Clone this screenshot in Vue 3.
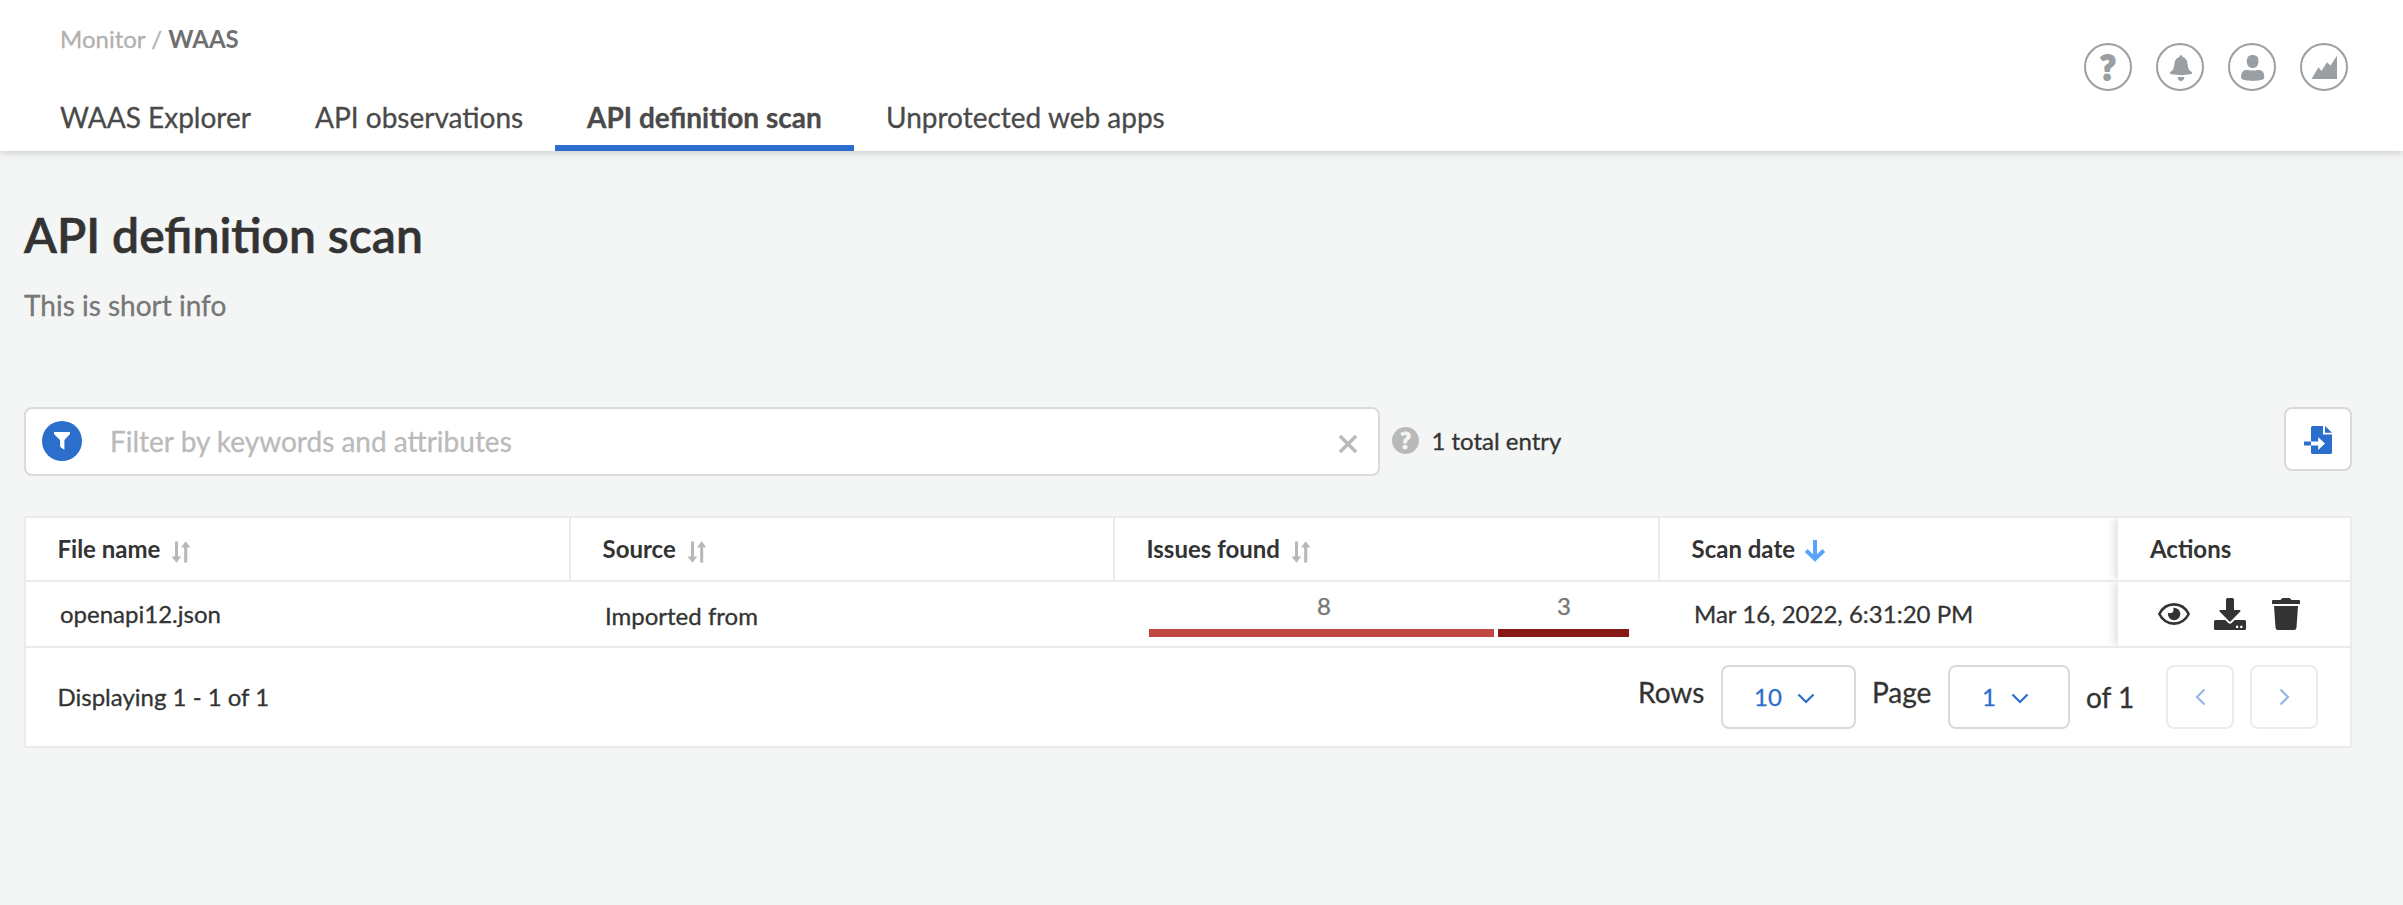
<script setup>
const tabs = [
  { label: 'WAAS Explorer', cls: 't1' },
  { label: 'API observations', cls: 't2' },
  { label: 'API definition scan', cls: 't3', active: true },
  { label: 'Unprotected web apps', cls: 't4' },
]
const columns = [
  { label: 'File name' },
  { label: 'Source' },
  { label: 'Issues found' },
  { label: 'Scan date', sorted: true },
]
</script>

<template>
  <div class="page">
    <header class="header">
      <div class="left">
        <div class="crumbs"><span>Monitor / </span><b>WAAS</b></div>
        <nav class="tabs">
          <div v-for="t in tabs" :key="t.label" class="tab" :class="[t.cls, { active: t.active }]">
            <span>{{ t.label }}</span>
          </div>
        </nav>
      </div>
      <div class="tools">
        <div class="tool"><span class="q">?</span></div>
        <div class="tool">
          <svg width="44" height="44" viewBox="0 0 44 44" fill="#999fa3">
            <path d="M23 10.300c1 0 1.600.6 1.600 1.600 3.300.9 4.600 3.600 5 7 .4 4.100 1.200 6.500 4.400 8.200.4 1.500-.3 1.900-1.500 2.200-6 1.100-13 1.100-19 0-1.200-.3-1.900-.8-1.500-2.200 3.200-1.700 4-4.100 4.400-8.200.4-3.400 1.700-6.100 5-7 0-1 .6-1.600 1.600-1.600z" />
            <path d="M19.800 32h6.400c0 2.600-1.200 4-3.200 4s-3.200-1.400-3.200-4z" />
          </svg>
        </div>
        <div class="tool">
          <svg width="44" height="44" viewBox="0 0 44 44" fill="#999fa3">
            <path d="M22.700 10c4 0 5.800 2.200 5.800 6.300 0 4-2.200 6.800-5.800 6.800s-5.900-2.800-5.900-6.800c0-4.100 1.900-6.300 5.900-6.300z" />
            <path d="M15.500 25.100c2-.5 3.500.5 7.200.5s5.200-1 7.200-.5c3.500.8 4.600 3.500 4.300 8.400-3.500 3.200-19.500 3.200-23 0-.3-4.900.8-7.600 4.300-8.400z" />
          </svg>
        </div>
        <div class="tool">
          <svg width="44" height="44" viewBox="0 0 44 44" fill="#999fa3">
            <path d="M9.500 34 16.500 22.300 19.500 26 25 17.300 28.500 20.500 35 10.500V34z" />
          </svg>
        </div>
      </div>
    </header>

    <main class="main">
      <h1>API definition scan</h1>
      <p class="info">This is short info</p>

      <div class="bar">
        <div class="search">
          <span class="funnel">
            <svg width="18" height="20" viewBox="0 0 18 20" fill="#fff"><path d="M1 1h16v2l-5.600 6v9.800l-3.200-2.100-1.200-1.700V9L1 3z" /></svg>
          </span>
          <span class="placeholder">Filter by keywords and attributes</span>
          <svg class="clear" width="20" height="20" viewBox="0 0 20 20" fill="none" stroke="#b9b9b9" stroke-width="3.400"><path d="M2 2l16 16M18 2 2 18" /></svg>
        </div>
        <span class="help">?</span>
        <span class="total">1 total entry</span>
        <button class="import">
          <svg width="28" height="28" viewBox="0 0 28 28" fill="#2c6ecb">
            <path d="M7 1.500Q7 0 8.500 0H19v8.500h9v18q0 1.500-1.500 1.500h-18Q7 28 7 26.500z" />
            <path d="M21 0 28 6.800H21z" />
            <path d="M0 15.500h7v4H0z" />
            <path fill="#fff" d="M7 15.500h7.200V11.200L21 17.500l-6.800 6.500v-4.500H7z" />
          </svg>
        </button>
      </div>

      <section class="table">
        <div class="row head">
          <div v-for="c in columns" :key="c.label" class="cell">
            <span>{{ c.label }}</span>
            <svg v-if="c.sorted" class="sorted" width="22" height="22" viewBox="0 0 22 22" fill="none" stroke="#57a5fb" stroke-width="4"><path d="M11 0v19M2.200 10.500 11 19l8.800-8.500" /></svg>
            <svg v-else class="sort" width="20" height="22" viewBox="0 0 20 22" fill="#b7b7b7"><path d="M4 0.500h3V15.500h3.200L5.500 21.800.5 15.500H4zM13.200 21.500h3V6.500h3.100L14.700.2 10 6.500h3.200z" /></svg>
          </div>
          <div class="cell actions"><span>Actions</span></div>
        </div>
        <div class="row body">
          <div class="cell">openapi12.json</div>
          <div class="cell source">Imported from</div>
          <div class="cell issues">
            <div class="issue high"><span>8</span><i></i></div>
            <div class="issue critical"><span>3</span><i></i></div>
          </div>
          <div class="cell date">Mar 16, 2022, 6:31:20 PM</div>
          <div class="cell actions">
            <svg width="32" height="22" viewBox="0 0 32 22">
              <path d="M1.300 11C4.500 4.800 10 1.400 16 1.400S27.500 4.800 30.700 11C27.500 17.200 22 20.600 16 20.600S4.500 17.200 1.300 11z" fill="none" stroke="#333" stroke-width="2.600" />
              <path d="M15.300 4.700a6.300 6.300 0 1 1-5.400 5.100c1.600.9 4.600.3 5.300-1.300.4-1.300.4-2.600.1-3.800z" fill="#333" />
            </svg>
            <svg width="32" height="32" viewBox="0 0 32 32" fill="#333">
              <path d="M13.500 0h5Q20 0 20 1.500V12h5.600q1.600.2.600 1.600L16.800 23.300q-.8.700-1.600 0L5.600 13.600Q4.600 12.200 6.200 12H12V1.500Q12 0 13.500 0z" />
              <path fill-rule="evenodd" d="M1.500 22h9.800l3 3q1.700 1.500 3.400 0l3-3h9.800Q32 22 32 23.500v7Q32 32 30.500 32h-29Q0 32 0 30.500v-7Q0 22 1.500 22zM22 27.700v2.200h2.200v-2.200zM26.200 27.700v2.200h2.200v-2.200z" />
            </svg>
            <svg width="28" height="32" viewBox="0 0 28 32" fill="#333">
              <path d="M1 2h7.500l1-1.300Q10 0 11 0h6q1 0 1.500.7l1 1.300H27q1 0 1 1v3H0V3q0-1 1-1zM2 8h24l-1.500 21.500Q24.300 32 22 32H6q-2.300 0-2.500-2.500z" />
            </svg>
          </div>
        </div>
        <div class="footer">
          <span class="displaying">Displaying 1 - 1 of 1</span>
          <span class="lbl rows">Rows</span>
          <div class="select s1">
            <span>10</span>
            <svg width="18" height="11" viewBox="0 0 18 11" fill="none" stroke="#2c6ecb" stroke-width="2.200"><path d="M1.500 1.500 9 9l7.500-7.500" /></svg>
          </div>
          <span class="lbl pg">Page</span>
          <div class="select s2">
            <span>1</span>
            <svg width="18" height="11" viewBox="0 0 18 11" fill="none" stroke="#2c6ecb" stroke-width="2.200"><path d="M1.500 1.500 9 9l7.500-7.500" /></svg>
          </div>
          <span class="lbl of">of 1</span>
          <button class="nav"><svg width="11" height="18" viewBox="0 0 11 18" fill="none" stroke="#95b6e5" stroke-width="2.200"><path d="M9.500 1.500 2 9l7.500 7.500" /></svg></button>
          <button class="nav"><svg width="11" height="18" viewBox="0 0 11 18" fill="none" stroke="#95b6e5" stroke-width="2.200"><path d="M1.500 1.500 9 9l-7.500 7.500" /></svg></button>
        </div>
      </section>
    </main>
  </div>
</template>

<style>
body { background: #f4f6f5; }
</style>

<style scoped>
* { box-sizing: border-box; }
svg { display: block; flex: none; }
.page { width: 2403px; height: 905px; overflow: hidden; background: #f4f6f5; font: 24px/30px Lato, "Liberation Sans", sans-serif; color: #333; -webkit-text-stroke: .3px currentColor; }
.header { height: 151px; background: #fff; display: flex; justify-content: space-between; box-shadow: 0 2px 7px rgba(0, 0, 0, .17); }
.left { display: flex; flex-direction: column; justify-content: space-between; padding-top: 24px; }
.crumbs { padding-left: 60px; color: #b0b0b0; white-space: pre; }
.crumbs b { color: #707070; font-weight: 700; -webkit-text-stroke-width: 0; }
.tabs { display: flex; padding-left: 28px; font-size: 28px; line-height: 34px; color: #4a4a4a; }
.tab { height: 51px; padding-left: 32px; white-space: nowrap; border-bottom: 6px solid transparent; }
.t1 { width: 255px; }
.t2 { width: 272px; }
.t3 { width: 299px; }
.t4 { width: 343px; }
.active { font-weight: 700; border-color: #2c6ecb; }
.tools { display: flex; gap: 24px; padding: 43px 55px 0 0; }
.tool { width: 48px; height: 48px; border: 2px solid #999fa3; border-radius: 50%; display: flex; justify-content: center; align-items: center; }
.q { font-size: 34px; font-weight: 900; color: #999fa3; line-height: 44px; -webkit-text-stroke-width: 2px; }
.main { padding: 54px 51px 0 24px; }
h1 { margin: 0; font-size: 48px; line-height: 60px; font-weight: 600; -webkit-text-stroke-width: .6px; }
.info { margin: 23px 0 85px; font-size: 28px; line-height: 34px; color: #777; }
.bar { display: flex; height: 69px; align-items: flex-start; }
.search { width: 1356px; height: 69px; border: 2px solid #d9dbda; border-radius: 8px; background: #fff; display: flex; align-items: center; padding: 0 20px 0 16px; }
.funnel { width: 40px; height: 40px; margin-bottom: 2px; border-radius: 50%; background: #2c6ecb; display: flex; justify-content: center; align-items: center; }
.placeholder { margin: 0 0 1px 28px; font-size: 28px; line-height: 34px; color: #bababa; }
.clear { margin: 4px 0 0 auto; }
.help { width: 27px; height: 27px; margin: 20px 0 0 12px; border-radius: 50%; background: #b9b9b9; color: #f4f6f5; font-size: 23px; line-height: 27px; font-weight: 900; text-align: center; -webkit-text-stroke-width: 1px; }
.total { margin: 19px 0 0 12.500px; }
button { padding: 0; background: #fff; border: 2px solid #d9d9d9; border-radius: 8px; width: 68px; height: 64px; display: flex; align-items: center; justify-content: center; }
.import { margin-left: auto; padding-top: 2px; }
.table { margin-top: 40px; border: 2px solid #eaebea; background: #fff; height: 232px; }
.row { display: grid; grid-template-columns: 545px 544px 545px 458px 232px; border-bottom: 2px solid #eaebea; }
.head { height: 64px; font-weight: 700; -webkit-text-stroke-width: 0; }
.body { height: 66px; }
.cell { display: flex; align-items: center; padding-left: 31.500px; white-space: nowrap; }
.head .cell { border-right: 2px solid #eaebea; }
.head .cell:nth-child(n+4) { border-right: 0; }
.body .cell { padding-left: 34px; }
.body .source { padding-top: 3px; }
.sort { margin: 5px 0 0 11px; }
.sorted { margin: 4px 0 0 9px; }
.head .actions { padding-left: 32px; }
.actions { box-shadow: -4px 0 8px rgba(0, 0, 0, .12); clip-path: inset(0 0 0 -14px); }
.body .actions { padding-left: 40px; gap: 24px; }
.body .actions svg:last-child { margin-left: 2px; }
.body .issues { gap: 4px; padding-left: 34px; color: #777; align-items: flex-start; }
.issue { padding-top: 9px; text-align: center; }
.issue span { display: block; height: 38px; }
.issue i { display: block; height: 8px; }
.high { width: 345px; }
.high span { padding-left: 5px; }
.high i { background: #c14742; }
.critical { width: 131px; }
.critical span { padding-left: 1px; }
.critical i { background: #861818; }
.footer { height: 98px; padding: 17px 32px 0 31.500px; display: flex; align-items: flex-start; }
.displaying { margin-top: 17px; }
.lbl { font-size: 28px; line-height: 34px; margin-top: 10px; white-space: nowrap; }
.rows { margin-left: auto; width: 83px; }
.select { height: 64px; border: 2px solid #d9d9d9; border-radius: 8px; display: flex; align-items: center; color: #2c6ecb; }
.s1 { width: 135px; padding-left: 31px; }
.s2 { width: 122px; padding-left: 32px; }
.select svg { margin: 3px 0 0 15px; }
.pg { width: 76px; margin-left: 16px; }
.of { width: 80px; margin: 15px 0 0 16px; }
.nav { border-color: #ececec; }
.nav + .nav { margin-left: 16px; }
</style>
